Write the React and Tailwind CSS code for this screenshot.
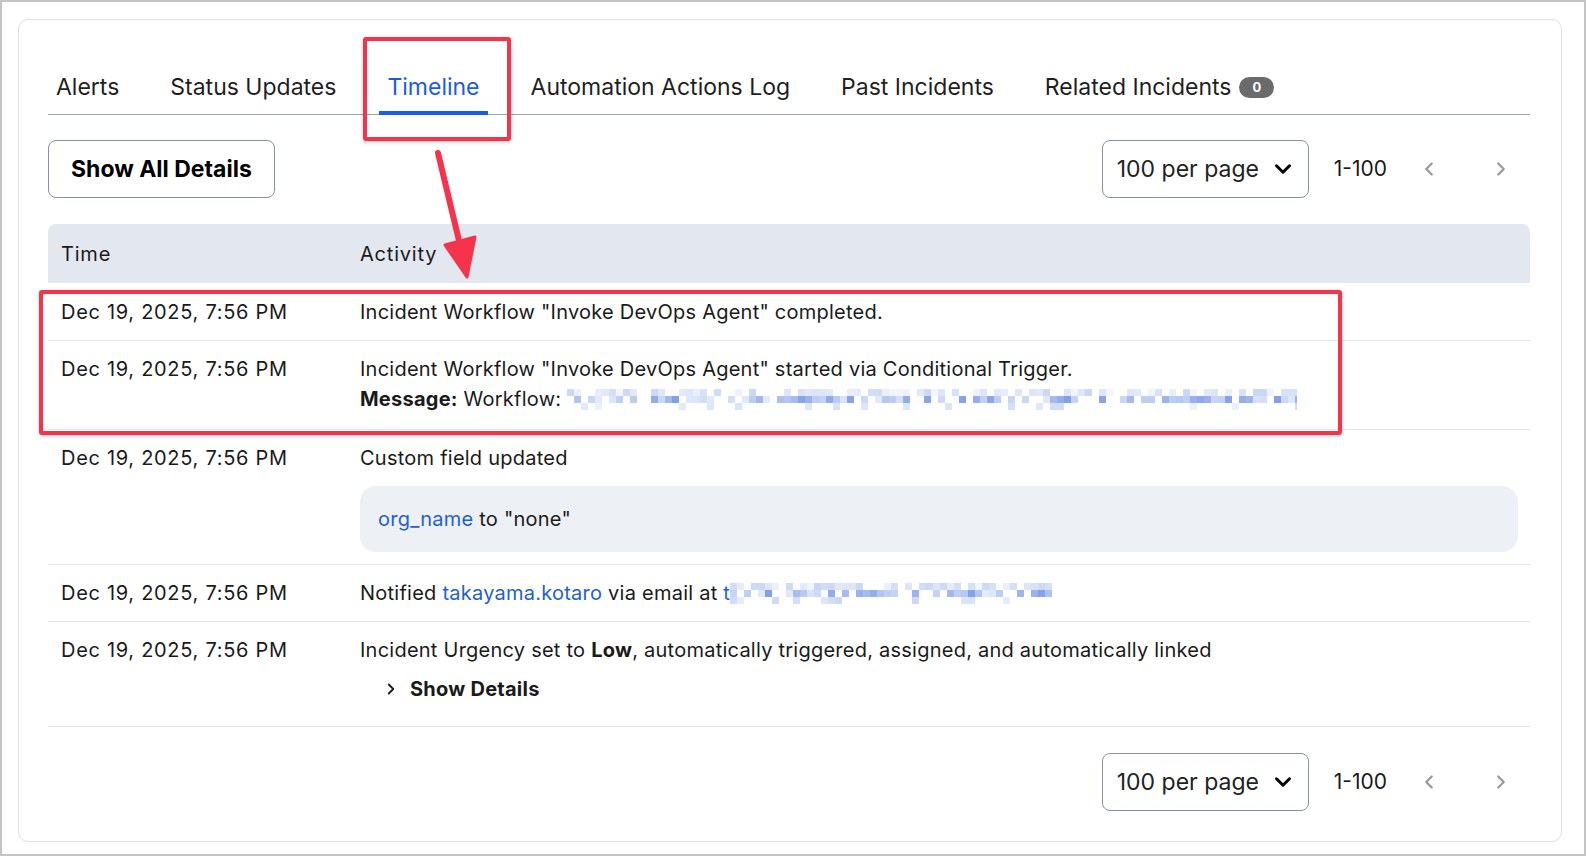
import { ChevronDown, ChevronLeft, ChevronRight } from 'lucide-react';

const font = { fontFamily: 'Inter, "Noto Sans", "Liberation Sans", sans-serif' };

// deterministic pseudo-random for the pixelated (redacted) text
function makeBlocks(width, seed) {
  let s = seed;
  const rnd = () => {
    s = (s * 9301 + 49297) % 233280;
    return s / 233280;
  };
  const out = [];
  const cell = 7;
  for (let x = 0; x < width; x += cell) {
    for (let row = 0; row < 3; row++) {
      const r = rnd();
      if (row === 2 && r < 0.85) continue;
      if (r < 0.3) continue;
      const a = row === 1 ? 0.12 + rnd() * 0.5 : 0.06 + rnd() * 0.2;
      out.push({ x, y: row * cell, a });
    }
  }
  return out;
}

const longBlocks = makeBlocks(730, 17);
const shortBlocks = makeBlocks(322, 91);

function Pixelated({ width, blocks }) {
  return (
    <svg width={width} height="21" className="inline-block align-middle -mt-[2px]">
      {blocks.map((b, i) => (
        <rect key={i} x={b.x} y={b.y} width="7" height="7" fill="#2f62d9" fillOpacity={b.a} />
      ))}
    </svg>
  );
}

const tabs = ['Alerts', 'Status Updates', 'Timeline', 'Automation Actions Log', 'Past Incidents', 'Related Incidents'];

function Pagination() {
  return (
    <div className="flex items-center justify-end">
      <button className="flex items-center h-[58px] w-[207px] pl-[14px] pr-[12px] border border-[#8592a6] rounded-[8px] text-[23px] text-[#222] justify-between">
        <span>100 per page</span>
        <ChevronDown size={26} strokeWidth={2.8} className="text-black" />
      </button>
      <span className="ml-[25px] text-[21px] text-[#1a1a1a]">1-100</span>
      <button className="ml-[13px] w-[58px] h-[58px] flex items-center justify-center text-[#9a9a9a]">
        <ChevronLeft size={22} strokeWidth={2.5} />
      </button>
      <button className="ml-[14px] w-[58px] h-[58px] flex items-center justify-center text-[#9a9a9a]">
        <ChevronRight size={22} strokeWidth={2.5} />
      </button>
    </div>
  );
}

function Row({ time, children, className }) {
  return (
    <div className={`grid grid-cols-[312px_1fr] border-b border-[#e3e6eb] text-[20px] leading-[30px] tracking-[0.012em] text-[#1a1a1a] ${className}`}>
      <div className="pl-[13px] tracking-[0.035em]">{time}</div>
      <div>{children}</div>
    </div>
  );
}

export default function App() {
  const t = 'Dec 19, 2025, 7:56 PM';
  return (
    <div style={font} className="w-[1586px] h-[856px] border-2 border-[#c4c4c4] bg-white pl-[16px] pt-[17px] pr-[22px] pb-[12px] overflow-hidden">
      <div className="relative h-full border border-[#e0e0e0] rounded-[10px] bg-white pl-[29px] pr-[31px] pt-[52px]">
        {/* tabs */}
        <div className="flex items-end gap-[35px] border-b border-[#9aa5b8]">
          {tabs.map((tab) => {
            const active = tab === 'Timeline';
            return (
              <div
                key={tab}
                className={`flex items-center px-[8px] pb-[9px] text-[23px] leading-[30px] border-b-4 -mb-px ${
                  active ? 'border-[#1a5ce5] text-[#1a5ce5]' : 'border-transparent text-[#1f1f1f]'
                }`}
              >
                {tab}
                {tab === 'Related Incidents' && (
                  <span className="ml-[8px] inline-flex items-center justify-center w-[35px] h-[21px] rounded-full bg-[#6b6b6b] text-white text-[13px] font-bold leading-none">
                    0
                  </span>
                )}
              </div>
            );
          })}
        </div>

        {/* controls */}
        <div className="mt-[25px] flex items-center justify-between">
          <button className="h-[58px] px-[22px] border border-[#8592a6] rounded-[8px] text-[23px] font-bold text-black">
            Show All Details
          </button>
          <Pagination />
        </div>

        {/* table */}
        <div className="mt-[26px]">
          <div className="grid grid-cols-[312px_1fr] h-[59px] items-center bg-[#e3e8f0] rounded-t-[8px] text-[20px] tracking-[0.04em] text-[#1a1a1a]">
            <div className="pl-[13px]">Time</div>
            <div>Activity</div>
          </div>

          <Row time={t} className="pt-[14px] pb-[13px]">
            Incident Workflow "Invoke DevOps Agent" completed.
          </Row>

          <Row time={t} className="pt-[13px] pb-[15px]">
            <div>Incident Workflow "Invoke DevOps Agent" started via Conditional Trigger.</div>
            <div>
              <span className="font-bold">Message:</span> Workflow: <Pixelated width={730} blocks={longBlocks} />
            </div>
          </Row>

          <Row time={t} className="pt-[13px] pb-[12px]">
            <div>Custom field updated</div>
            <div className="mt-[13px] mr-[12px] h-[66px] flex items-center px-[18px] bg-[#edf1f6] rounded-[16px]">
              <span className="text-[#1f5fd6]">org_name</span>&nbsp;to "none"
            </div>
          </Row>

          <Row time={t} className="pt-[13px] pb-[13px]">
            Notified <span className="text-[#1f5fd6]">takayama.kotaro</span> via email at{' '}
            <span className="text-[#1f5fd6]">t</span>
            <Pixelated width={322} blocks={shortBlocks} />
          </Row>

          <Row time={t} className="pt-[13px] pb-[22px]">
            <div>
              Incident Urgency set to <span className="font-bold">Low</span>, automatically triggered, assigned, and
              automatically linked
            </div>
            <div className="mt-[9px] flex items-center pl-[22px] font-bold">
              <ChevronRight size={18} strokeWidth={2.4} className="mr-[10px]" />
              Show Details
            </div>
          </Row>
        </div>

        <div className="mt-[26px]">
          <Pagination />
        </div>

        {/* annotations */}
        <div className="absolute left-[344px] top-[17px] w-[148px] h-[104px] border-4 border-[#f5334a] rounded-[3px] shadow-[0_1px_4px_rgba(0,0,0,0.2)]" />
        <div className="absolute left-[20px] top-[270px] w-[1303px] h-[145px] border-4 border-[#f5334a] rounded-[3px] shadow-[0_1px_4px_rgba(0,0,0,0.2)]" />
        <svg className="absolute left-[400px] top-[125px]" width="80" height="140" viewBox="0 0 80 140">
          <line x1="19" y1="8" x2="42" y2="104" stroke="#f5334a" strokeWidth="6" strokeLinecap="round" />
          <polygon points="26,100 56,92 48,132" fill="#f5334a" stroke="#f5334a" strokeWidth="3" strokeLinejoin="round" />
        </svg>
      </div>
    </div>
  );
}
